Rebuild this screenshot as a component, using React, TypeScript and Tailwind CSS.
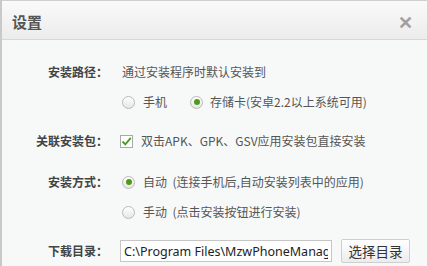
import { useState } from 'react';

const font = { fontFamily: '"Noto Sans CJK SC", "Noto Sans", sans-serif' };

function Radio({ checked }: { checked: boolean }) {
  return (
    <span className="w-[13px] h-[13px] rounded-full border border-[#b9b9b9] bg-gradient-to-b from-white to-[#e6e6e6] flex items-center justify-center shrink-0">
      {checked && <span className="w-[6px] h-[6px] rounded-full bg-[#4f9a16]" />}
    </span>
  );
}

function Checkbox({ checked }: { checked: boolean }) {
  return (
    <span className="w-[13px] h-[13px] border border-[#a9a9a9] bg-white flex items-center justify-center shrink-0">
      {checked && (
        <svg width="11" height="11" viewBox="0 0 11 11">
          <path d="M1.5 5.5 L4.3 8.3 L9.8 1.8" fill="none" stroke="#4c9a1c" strokeWidth="1.8" />
        </svg>
      )}
    </span>
  );
}

export default function App() {
  const [path] = useState('C:\\Program Files\\MzwPhoneManager\\Download');
  return (
    <div className="w-[427px] h-[266px] flex bg-[#d4d4d4] overflow-hidden" style={font}>
      <div className="w-[2px] bg-[#c9c9c9]" />
      <div className="flex-1 flex flex-col border-t border-[#cfcfcf] bg-[#f7f9f9]">
        {/* header */}
        <div className="h-[39px] shrink-0 flex items-center justify-between pl-[10px] pr-[14px] bg-gradient-to-b from-[#fafafa] to-[#ececec] border-b border-[#d6d8d8]">
          <span className="text-[15px] text-[#555] font-bold pt-[5px]">设置</span>
          <span className="text-[18px] leading-none text-[#a0a0a0] font-bold pt-[2px]">✕</span>
        </div>

        {/* body */}
        <div className="flex flex-col pt-[22px] text-[12px] text-[#555]">
          <div className="flex items-center h-[20px]">
            <span className="w-[106px] text-right font-bold text-[#444]">安装路径：</span>
            <span className="ml-[14px]">通过安装程序时默认安装到</span>
          </div>
          <div className="flex items-center h-[20px] mt-[10px] pl-[120px]">
            <Radio checked={false} />
            <span className="ml-[8px]">手机</span>
            <span className="ml-[23px]"><Radio checked /></span>
            <span className="ml-[7px]">存储卡(安卓2.2以上系统可用)</span>
          </div>
          <div className="flex items-center h-[20px] mt-[19px]">
            <span className="w-[106px] text-right font-bold text-[#444]">关联安装包：</span>
            <span className="ml-[12px]"><Checkbox checked /></span>
            <span className="ml-[8px]">双击APK、GPK、GSV应用安装包直接安装</span>
          </div>
          <div className="flex items-center h-[20px] mt-[21px]">
            <span className="w-[106px] text-right font-bold text-[#444]">安装方式：</span>
            <span className="ml-[14px]"><Radio checked /></span>
            <span className="ml-[8px]">自动&nbsp; (连接手机后,自动安装列表中的应用)</span>
          </div>
          <div className="flex items-center h-[20px] mt-[10px] pl-[120px]">
            <Radio checked={false} />
            <span className="ml-[8px]">手动&nbsp; (点击安装按钮进行安装)</span>
          </div>
          <div className="flex items-center h-[24px] mt-[17px]">
            <span className="w-[106px] text-right font-bold text-[#444]">下载目录：</span>
            <input
              readOnly
              value={path}
              className="ml-[12px] w-[212px] h-[22px] border border-[#c6c6c6] bg-white px-[3px] text-[12.5px] text-[#222] outline-none"
              style={{ fontFamily: '"Noto Sans", sans-serif' }}
            />
            <button className="ml-[9px] w-[69px] h-[24px] border border-[#cfcfcf] rounded-[2px] bg-gradient-to-b from-white to-[#ececec] text-[13.5px] text-[#333]">
              选择目录
            </button>
          </div>
        </div>
      </div>
    </div>
  );
}
